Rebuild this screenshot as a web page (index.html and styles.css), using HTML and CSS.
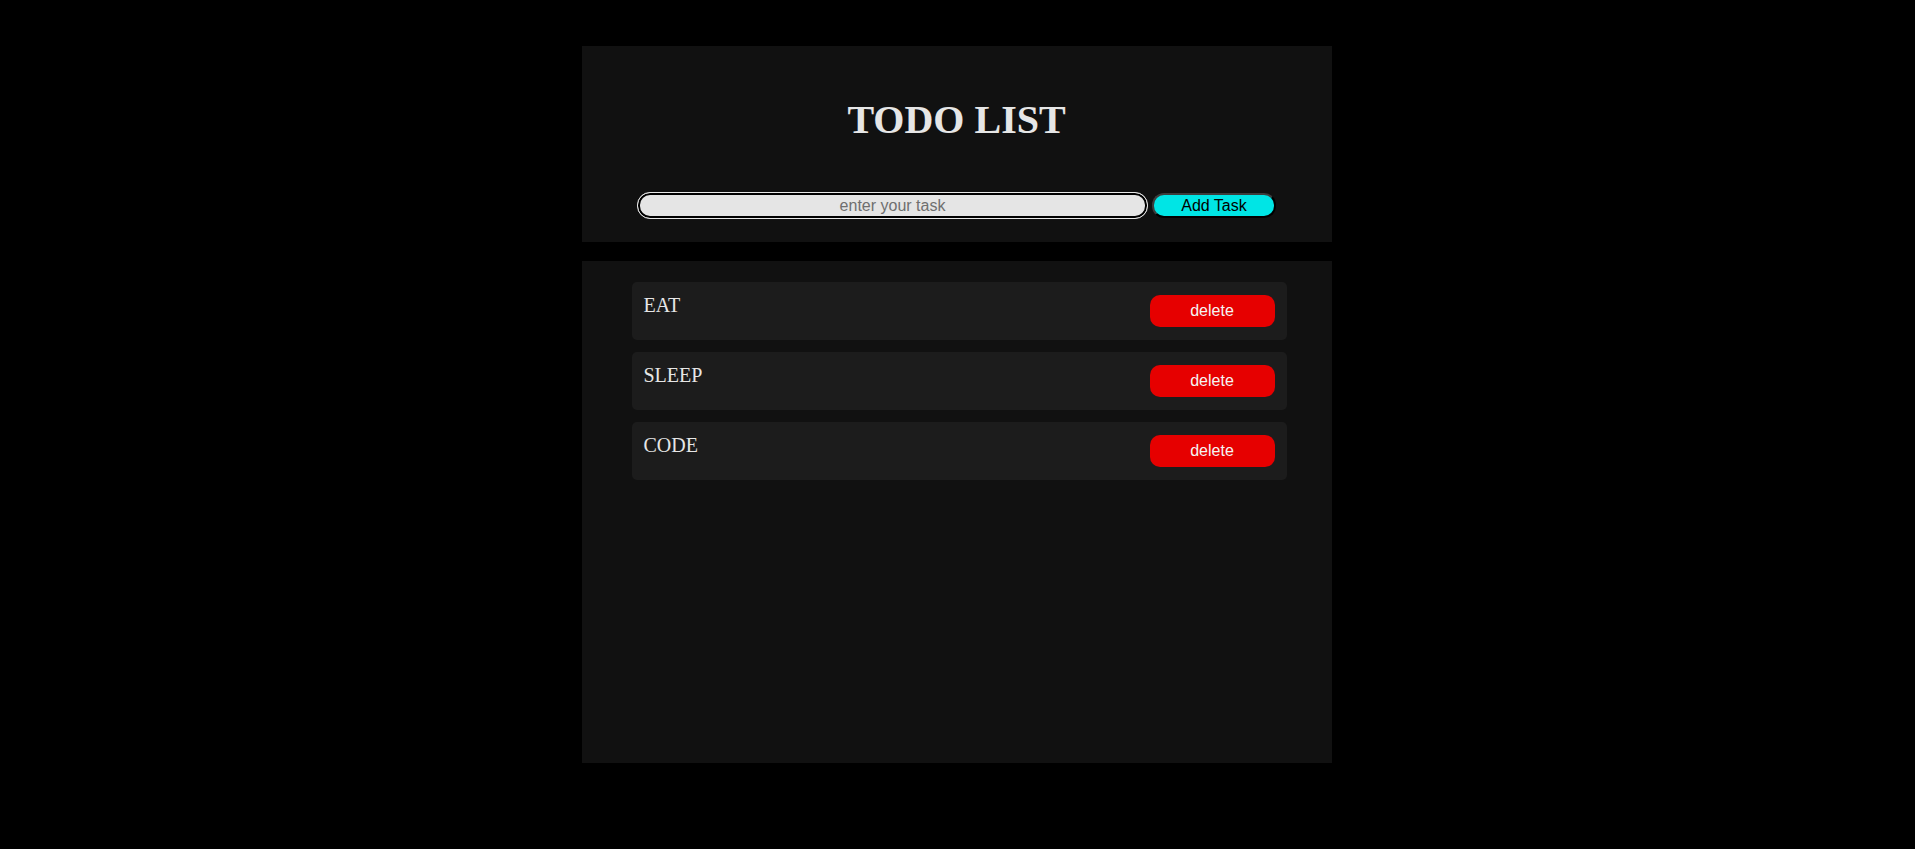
FILE: index.html
```html
<!DOCTYPE html>
<html lang="en">
<head>
<meta charset="utf-8">
<title>Todo List</title>
<link rel="stylesheet" href="styles.css">
</head>
<body>
<div class="app">
  <header class="header">
    <h1 class="title">TODO LIST</h1>
    <form class="add-form">
      <input class="task-input" type="text" placeholder="enter your task">
      <button class="add-btn" type="button">Add Task</button>
    </form>
  </header>
  <section class="list">
    <div class="item"><span class="item-text">EAT</span><button class="delete-btn" type="button">delete</button></div>
    <div class="item"><span class="item-text">SLEEP</span><button class="delete-btn" type="button">delete</button></div>
    <div class="item"><span class="item-text">CODE</span><button class="delete-btn" type="button">delete</button></div>
  </section>
</div>
</body>
</html>
```
FILE: styles.css
```css
* { box-sizing: border-box; }
html, body { margin: 0; padding: 0; background: #000; }
body { font-family: "Liberation Serif", "Times New Roman", serif; }

.app {
  width: 750px;
  margin: 46px 0 0 calc(50% - 376px);
}

.header {
  background: #111111;
  padding: 51px 0 23px;
}

.title {
  margin: 0;
  text-align: center;
  font-family: "Liberation Serif", "Times New Roman", serif;
  font-weight: bold;
  font-size: 40px;
  line-height: 46px;
  color: #e6e6e6;
}

.add-form {
  margin: 49px 0 0;
  display: flex;
  justify-content: center;
  align-items: center;
  gap: 4px;
}

.task-input {
  width: 511px;
  height: 27px;
  margin: 0;
  padding: 0 10px;
  border: 1px solid #e8e8e8;
  border-radius: 13px;
  box-shadow: inset 0 0 0 2px #000;
  background: #e5e5e5;
  font-family: "Liberation Sans", Arial, sans-serif;
  font-size: 16px;
  color: #222;
  text-align: center;
  outline: none;
}
.task-input::placeholder { color: #6f6f6f; }

.add-btn {
  width: 124px;
  height: 25px;
  margin: 0;
  padding: 0;
  border: 2px solid;
  border-color: #3c3c3c #000 #000 #3c3c3c;
  border-radius: 12px;
  background: #00e5e5;
  color: #000;
  font-family: "Liberation Sans", Arial, sans-serif;
  font-size: 16px;
  line-height: 19px;
}

.list {
  margin-top: 19px;
  background: #111111;
  height: 502px;
  padding: 21px 45px 0 50px;
  display: flex;
  flex-direction: column;
  gap: 12px;
}

.item {
  height: 58px;
  background: #1c1c1c;
  border-radius: 5px;
  padding: 12px;
  display: flex;
  justify-content: space-between;
  align-items: center;
}

.item-text {
  align-self: flex-start;
  font-family: "Liberation Serif", "Times New Roman", serif;
  font-size: 20px;
  color: #e6e6e6;
}

.delete-btn {
  width: 125px;
  height: 32px;
  margin: 0;
  padding: 0;
  border: none;
  border-radius: 10px;
  background: #e60000;
  color: #f4f4f4;
  font-family: "Liberation Sans", Arial, sans-serif;
  font-size: 16px;
}
```
